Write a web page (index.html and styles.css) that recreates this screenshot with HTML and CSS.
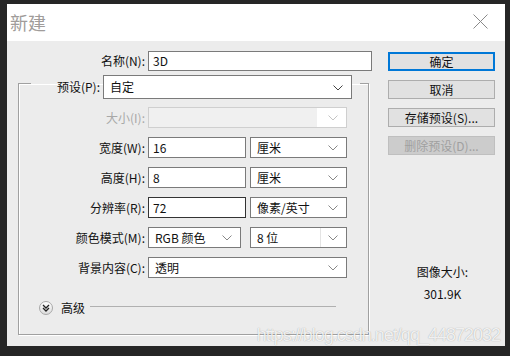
FILE: index.html
```html
<!DOCTYPE html>
<html>
<head>
    <title>新建</title>
    <link rel="stylesheet" href="styles.css">
</head>
<body>
    <div class="window">
        <div class="titlebar">
            <span class="title">新建</span>
            <svg class="close" width="15" height="15" viewBox="0 0 15 15">
                <path d="M0.5 0.5 L14.5 14.5 M14.5 0.5 L0.5 14.5" stroke="#8a8a8a" stroke-width="1" fill="none"/>
            </svg>
        </div>

        <div class="content">
            <div class="form">
                <div class="row name-row">
                    <span class="lbl">名称(N):</span>
                    <div class="box name-box">3D</div>
                </div>

                <fieldset class="group">
                    <legend class="preset">
                        <span class="lbl">预设(P):</span>
                        <div class="box select preset-box">自定
                            <svg class="arrow dark" width="10" height="6" viewBox="0 0 10 6"><path d="M0.5 0.5 L5 5 L9.5 0.5" stroke="#444" fill="none"/></svg>
                        </div>
                    </legend>

                    <div class="row">
                        <span class="lbl off">大小(I):</span>
                        <div class="box select disabled full">
                            <span class="fill"></span>
                            <svg class="arrow" width="10" height="6" viewBox="0 0 10 6"><path d="M0.5 0.5 L5 5 L9.5 0.5" stroke="#c4c4c4" fill="none"/></svg>
                        </div>
                    </div>
                    <div class="row">
                        <span class="lbl">宽度(W):</span>
                        <div class="box num">16</div>
                        <div class="box select unit">厘米
                            <svg class="arrow" width="10" height="6" viewBox="0 0 10 6"><path d="M0.5 0.5 L5 5 L9.5 0.5" stroke="#888" fill="none"/></svg>
                        </div>
                    </div>
                    <div class="row">
                        <span class="lbl">高度(H):</span>
                        <div class="box num">8</div>
                        <div class="box select unit">厘米
                            <svg class="arrow" width="10" height="6" viewBox="0 0 10 6"><path d="M0.5 0.5 L5 5 L9.5 0.5" stroke="#888" fill="none"/></svg>
                        </div>
                    </div>
                    <div class="row">
                        <span class="lbl">分辨率(R):</span>
                        <div class="box num focus">72</div>
                        <div class="box select unit">像素/英寸
                            <svg class="arrow" width="10" height="6" viewBox="0 0 10 6"><path d="M0.5 0.5 L5 5 L9.5 0.5" stroke="#888" fill="none"/></svg>
                        </div>
                    </div>
                    <div class="row">
                        <span class="lbl">颜色模式(M):</span>
                        <div class="box select mode">RGB 颜色
                            <svg class="arrow" width="10" height="6" viewBox="0 0 10 6"><path d="M0.5 0.5 L5 5 L9.5 0.5" stroke="#888" fill="none"/></svg>
                        </div>
                        <div class="box select unit split">8 位
                            <span class="sep"></span>
                            <svg class="arrow" width="10" height="6" viewBox="0 0 10 6"><path d="M0.5 0.5 L5 5 L9.5 0.5" stroke="#888" fill="none"/></svg>
                        </div>
                    </div>
                    <div class="row">
                        <span class="lbl">背景内容(C):</span>
                        <div class="box select full">透明
                            <svg class="arrow" width="10" height="6" viewBox="0 0 10 6"><path d="M0.5 0.5 L5 5 L9.5 0.5" stroke="#888" fill="none"/></svg>
                        </div>
                    </div>

                    <div class="advanced">
                        <span class="toggle">
                            <svg width="8" height="8" viewBox="0 0 8 8"><path d="M1 1 L4 4 L7 1 M1 4 L4 7 L7 4" stroke="#222" stroke-width="1.3" fill="none"/></svg>
                        </span>
                        <span class="adv-text">高级</span>
                        <span class="adv-line"></span>
                    </div>
                </fieldset>
            </div>

            <div class="side">
                <div class="btn default">确定</div>
                <div class="btn">取消</div>
                <div class="btn">存储预设(S)...</div>
                <div class="btn disabled">删除预设(D)...</div>

                <div class="info">
                    <div>图像大小:</div>
                    <div>301.9K</div>
                </div>
            </div>
        </div>

        <div class="watermark">https://blog.csdn.net/qq_44872032</div>
    </div>
</body>
</html>
```

FILE: styles.css
```css
body {
    margin: 0;
    padding: 4px 5px 0 7px;
    background: #262626;
    font-family: "Noto Sans CJK SC", sans-serif;
    font-size: 12px;
    color: #111;
}
.window {
    position: relative;
    height: 342px;
    background: #ececec;
    overflow: hidden;
}
.titlebar {
    height: 37px;
    background: #fff;
    display: flex;
    align-items: center;
    padding: 0 17px 0 3px;
}
.title {
    flex: 1;
    font-size: 18px;
    color: #a09c9a;
    margin-top: -2px;
}
.close {
    display: block;
    margin-top: -2px;
}
.content {
    display: flex;
    padding: 10px 10px 0 11px;
}
.form {
    width: 354px;
}
.side {
    margin-left: auto;
    width: 107px;
    padding-top: 1px;
}

/* rows */
.row {
    display: flex;
    align-items: center;
    height: 21px;
    margin-bottom: 9px;
}
.lbl {
    width: 114px;
    margin-right: 3px;
    text-align: right;
    white-space: nowrap;
    line-height: 20px;
}
.lbl.off {
    color: #a8a8a8;
}
.name-row {
    height: 20px;
    margin-bottom: 0;
}
.name-row .lbl {
    width: 127px;
}

.box {
    box-sizing: border-box;
    height: 21px;
    border: 1px solid #7a7a7a;
    background: #fff;
    padding: 0 4px;
    line-height: 19px;
    position: relative;
    white-space: nowrap;
}
.name-box {
    width: 224px;
    height: 20px;
    line-height: 18px;
}
.num {
    width: 98px;
}
.focus {
    border-color: #333;
}
.select {
    padding-left: 6px;
}
.unit {
    width: 97px;
    margin-left: 4px;
}
.mode {
    width: 93px;
}
.split {
    margin-left: 9px;
}
.full {
    width: 199px;
}
.arrow {
    position: absolute;
    right: 8px;
    top: 7px;
}
.sep {
    position: absolute;
    right: 25px;
    top: 0;
    bottom: 0;
    border-left: 1px solid #e4e4e4;
}
.disabled.box {
    border-color: #cfcfcf;
    background: #fff;
}
.disabled .fill {
    position: absolute;
    left: 0;
    top: 0;
    bottom: 0;
    right: 29px;
    background: #f0f0f0;
}

/* group box */
.group {
    margin: -4px 0 0 0;
    padding: 8px 0 19px 12px;
    width: 351px;
    box-sizing: border-box;
    min-inline-size: 0;
    border: 1px solid #a0a0a0;
    box-shadow: inset 1px 1px 0 #fff, 1px 1px 0 #fff;
}
.preset {
    display: flex;
    align-items: center;
    padding: 8px 8px 0 8px;
}
.preset .lbl {
    width: 61px;
}
.preset-box {
    width: 249px;
    height: 24px;
    line-height: 22px;
}
.preset-box .arrow {
    top: 9px;
}

/* advanced */
.advanced {
    display: flex;
    align-items: center;
    margin: 23px 32px 0 8px;
    height: 14px;
}
.toggle {
    box-sizing: border-box;
    width: 14px;
    height: 14px;
    border-radius: 50%;
    border: 1px solid #a8a8a8;
    background: linear-gradient(#ffffff, #dcdcdc);
    display: flex;
    align-items: center;
    justify-content: center;
}
.adv-text {
    margin-left: 8px;
    line-height: 20px;
}
.adv-line {
    flex: 1;
    margin-left: 5px;
    margin-top: -3px;
    border-top: 1px solid #b0b0b0;
}

/* buttons */
.btn {
    box-sizing: border-box;
    height: 19px;
    margin-bottom: 9px;
    border: 1px solid #adadad;
    background: #e1e1e1;
    text-align: center;
    line-height: 17px;
}
.btn.default {
    border: 2px solid #0078d7;
    line-height: 15px;
}
.btn.disabled {
    background: #cccccc;
    border-color: #bfbfbf;
    color: #a0a0a0;
}
.info {
    margin-top: 106px;
    text-align: center;
    line-height: 22px;
    padding-left: 2px;
}

.watermark {
    position: absolute;
    right: 5px;
    bottom: 2px;
    font-family: "Liberation Sans", sans-serif;
    font-size: 18px;
    line-height: 18px;
    letter-spacing: -1px;
    color: rgba(255, 255, 255, 0.85);
    text-shadow: 0 0 1px rgba(0, 0, 0, 0.35);
}
```
